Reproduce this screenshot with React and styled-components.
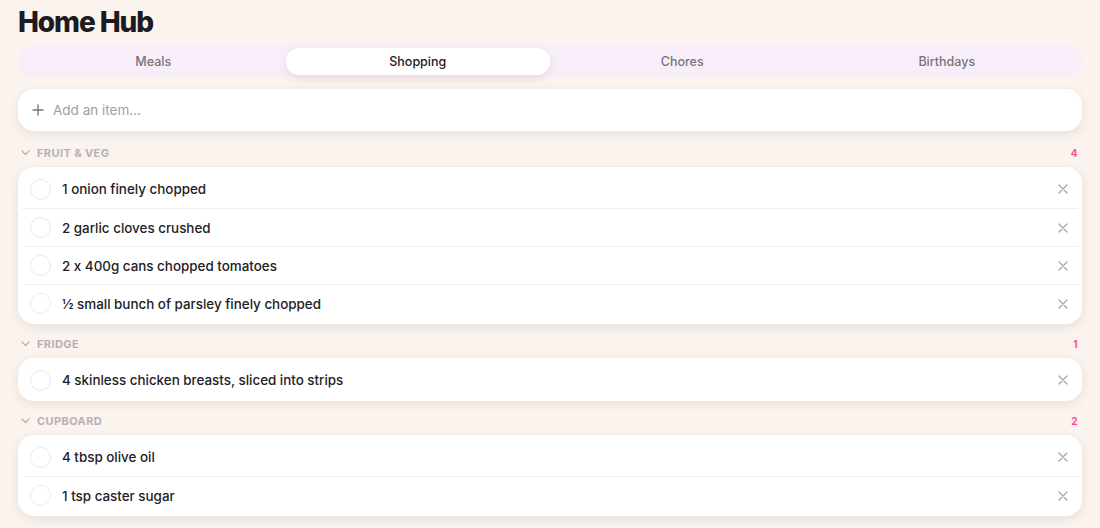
import React from 'react';
import styled, { createGlobalStyle } from 'styled-components';

const GlobalStyle = createGlobalStyle`
  * { box-sizing: border-box; }
  body {
    margin: 0;
    background: #faf3ee;
    font-family: Inter, "Noto Sans", sans-serif;
    font-feature-settings: "calt" 0;
    color: #221d26;
  }
`;

const Page = styled.div`
  display: flex;
  flex-direction: column;
  padding: 6px 18px 12px;
`;

const Title = styled.h1`
  margin: 0 0 7px;
  font-size: 28px;
  line-height: 32px;
  font-weight: 800;
  letter-spacing: -1.1px;
  color: #1e1a22;
`;

const Tabs = styled.div`
  display: grid;
  grid-template-columns: repeat(4, 1fr);
  padding: 3px;
  border-radius: 16px;
  background: #f8eefa;
`;

const Tab = styled.div`
  height: 27px;
  display: flex;
  align-items: center;
  justify-content: center;
  border-radius: 13px;
  font-size: 12.5px;
  font-weight: 500;
  color: ${(p) => (p.$active ? '#1e1a22' : '#7a727c')};
  background: ${(p) => (p.$active ? '#fff' : 'transparent')};
  box-shadow: ${(p) => (p.$active ? '0 3px 8px rgba(90, 60, 40, 0.12)' : 'none')};
`;

const AddBox = styled.div`
  margin: 11px 0 2px;
  height: 42px;
  display: flex;
  align-items: center;
  gap: 9px;
  padding: 0 14px;
  border-radius: 16px;
  background: #fff;
  box-shadow: 0 3px 10px rgba(110, 80, 50, 0.12);
  font-size: 13.5px;
  color: #a39ca5;
`;

const Section = styled.section`
  margin-top: 13px;
`;

const SectionHead = styled.div`
  height: 14px;
  display: flex;
  align-items: center;
  gap: 7px;
  padding: 0 4px 0 3px;
  margin-bottom: 7px;
  font-size: 11px;
  font-weight: 700;
  letter-spacing: 0.4px;
  text-transform: uppercase;
  color: #b8afb9;
`;

const Count = styled.span`
  margin-left: auto;
  font-size: 10px;
  font-weight: 700;
  color: #ff4d94;
`;

const Card = styled.ul`
  margin: 0;
  padding: 3px 0 2px;
  list-style: none;
  border-radius: 16px;
  background: #fff;
  box-shadow: 0 3px 10px rgba(110, 80, 50, 0.12);
  overflow: hidden;
`;

const Row = styled.li`
  height: 38px;
  display: flex;
  align-items: center;
  gap: 11px;
  margin: 0 4px;
  padding: 0 10px 0 8px;
  border-top: ${(p) => (p.$first ? 'none' : '1px solid #f2eef0')};
  font-size: 13.4px;
  font-weight: 500;
  color: #221d26;
`;

const Check = styled.span`
  width: 21px;
  height: 21px;
  flex: none;
  border-radius: 50%;
  border: 1.5px solid #ebe7e9;
`;

const Remove = styled.svg`
  margin-left: auto;
  width: 10px;
  height: 10px;
  color: #a8a2aa;
`;

const Cross = () => (
  <Remove viewBox="0 0 10 10" fill="none" stroke="currentColor" strokeWidth="1.3" strokeLinecap="round">
    <path d="M1 1l8 8M9 1l-8 8" />
  </Remove>
);

const Chevron = () => (
  <svg width="9" height="6" viewBox="0 0 9 6" fill="none" stroke="#b8afb9" strokeWidth="1.3" strokeLinecap="round" strokeLinejoin="round">
    <path d="M1 1l3.5 3.5L8 1" />
  </svg>
);

const Plus = () => (
  <svg width="12" height="12" viewBox="0 0 12 12" fill="none" stroke="#7a727c" strokeWidth="1.4" strokeLinecap="round">
    <path d="M6 1v10M1 6h10" />
  </svg>
);

const sections = [
  {
    name: 'Fruit & Veg',
    items: [
      '1 onion finely chopped',
      '2 garlic cloves crushed',
      '2 x 400g cans chopped tomatoes',
      '½ small bunch of parsley finely chopped',
    ],
  },
  { name: 'Fridge', items: ['4 skinless chicken breasts, sliced into strips'] },
  { name: 'Cupboard', items: ['4 tbsp olive oil', '1 tsp caster sugar'] },
];

const tabs = ['Meals', 'Shopping', 'Chores', 'Birthdays'];

export default function App() {
  return (
    <Page>
      <GlobalStyle />
      <Title>Home Hub</Title>
      <Tabs>
        {tabs.map((t) => (
          <Tab key={t} $active={t === 'Shopping'}>{t}</Tab>
        ))}
      </Tabs>
      <AddBox>
        <Plus />
        Add an item...
      </AddBox>
      {sections.map((s) => (
        <Section key={s.name}>
          <SectionHead>
            <Chevron />
            {s.name}
            <Count>{s.items.length}</Count>
          </SectionHead>
          <Card>
            {s.items.map((item, i) => (
              <Row key={item} $first={i === 0}>
                <Check />
                {item}
                <Cross />
              </Row>
            ))}
          </Card>
        </Section>
      ))}
    </Page>
  );
}
